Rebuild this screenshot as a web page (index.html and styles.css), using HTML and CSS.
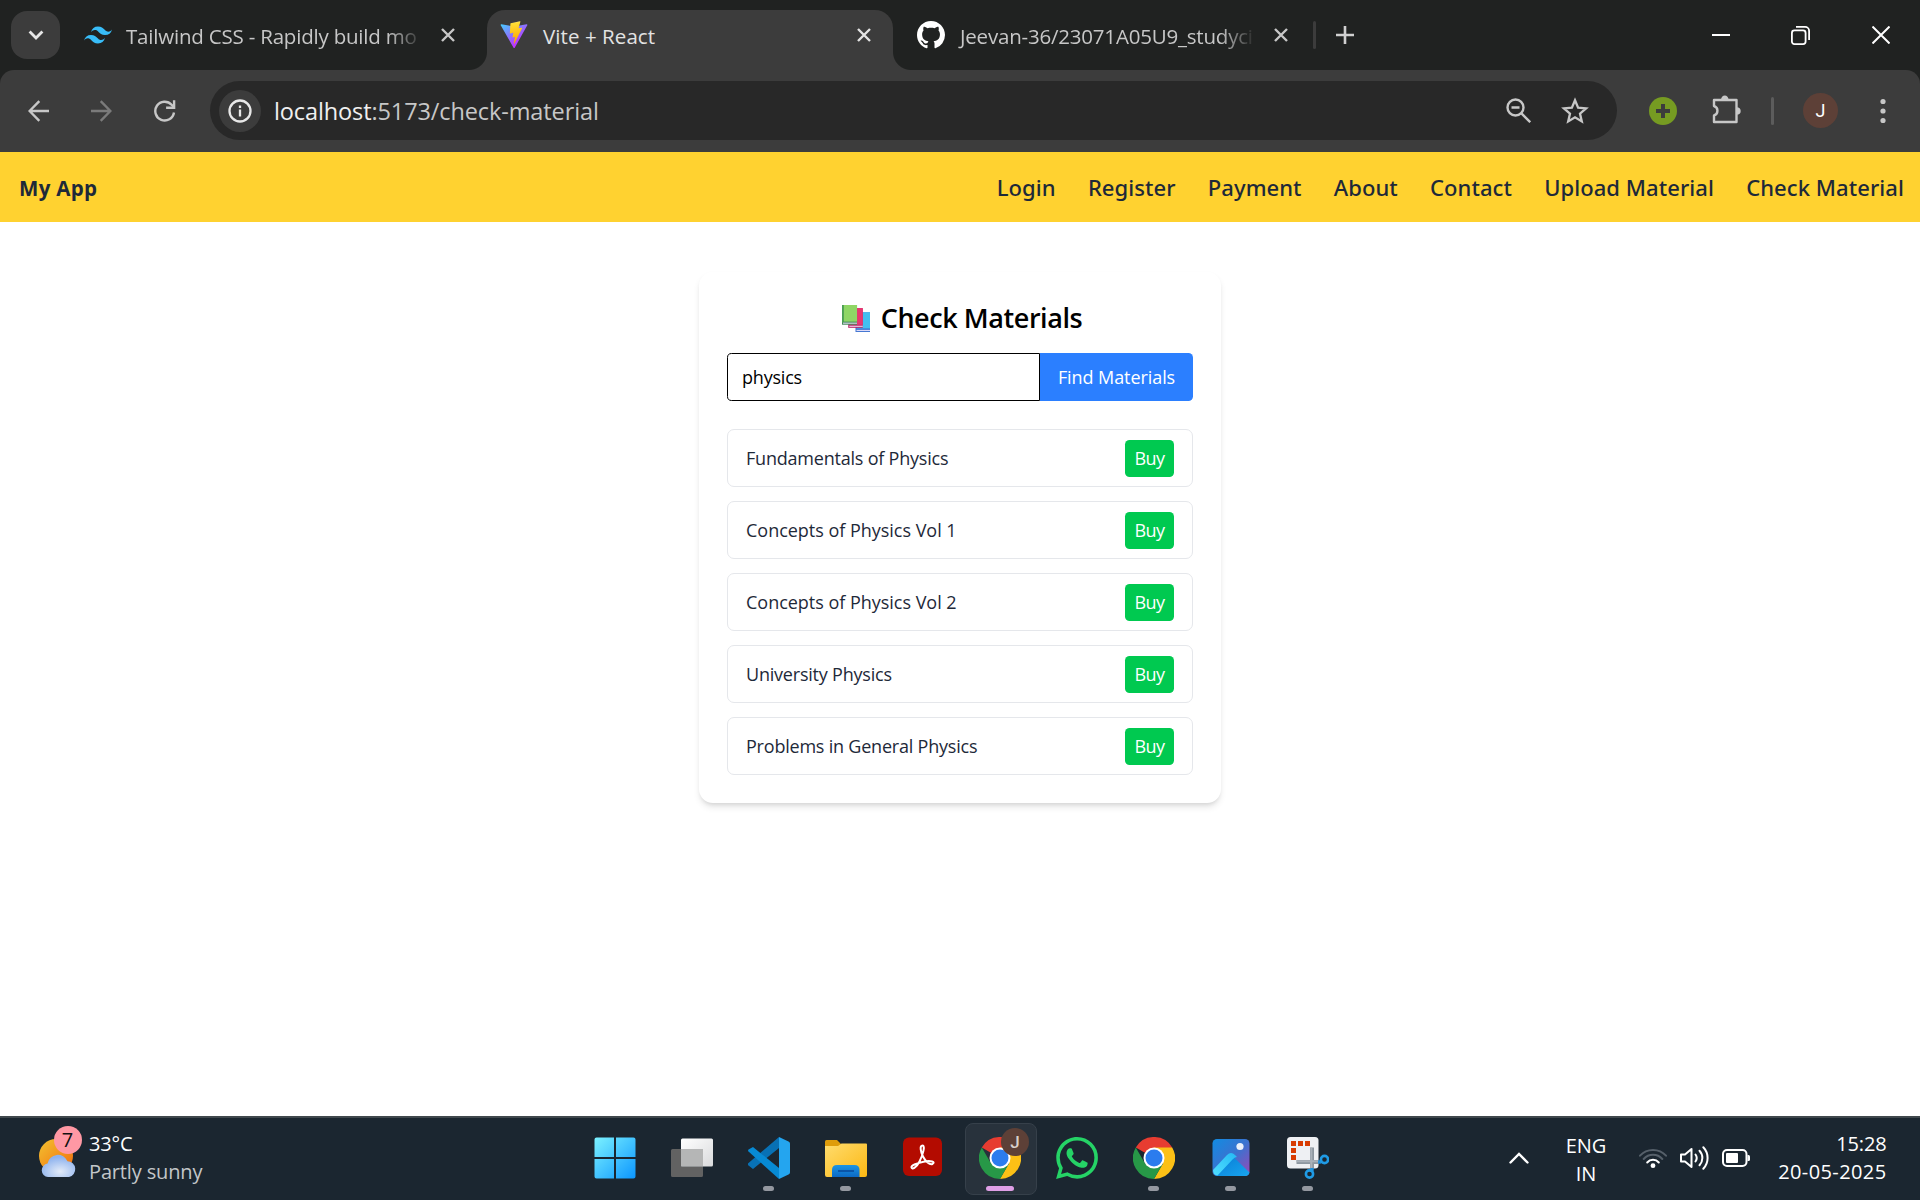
FILE: index.html
```html
<!DOCTYPE html>
<html lang="en">
<head>
<meta charset="utf-8">
<title>Vite + React</title>
<link rel="stylesheet" href="styles.css">
</head>
<body>
<svg class="defs" width="0" height="0" aria-hidden="true">
  <defs>
    <linearGradient id="vite-a" x1="6" y1="33" x2="235" y2="344" gradientUnits="userSpaceOnUse"><stop stop-color="#41d1ff"/><stop offset="1" stop-color="#bd34fe"/></linearGradient>
    <linearGradient id="vite-b" x1="194.651" y1="8.818" x2="236.076" y2="292.989" gradientUnits="userSpaceOnUse"><stop stop-color="#ffea83"/><stop offset=".083" stop-color="#ffdd35"/><stop offset="1" stop-color="#ffa800"/></linearGradient>
    <linearGradient id="win" gradientUnits="userSpaceOnUse" x1="0" y1="0" x2="42" y2="42"><stop stop-color="#7df3ff"/><stop offset="1" stop-color="#0a95ff"/></linearGradient>
    <linearGradient id="sun" x1="0" y1="0" x2="1" y2="1"><stop stop-color="#f2c230"/><stop offset="1" stop-color="#f26a0c"/></linearGradient>
    <radialGradient id="cloud" cx=".55" cy=".75" r=".65"><stop stop-color="#e3ebf8"/><stop offset="1" stop-color="#8db2ee"/></radialGradient>
    <linearGradient id="folder" x1="0" y1="0" x2="1" y2="1"><stop stop-color="#ffdc6e"/><stop offset="1" stop-color="#fcb813"/></linearGradient>
    <linearGradient id="tray" x1="0" y1="0" x2="0" y2="1"><stop stop-color="#1b95e4"/><stop offset="1" stop-color="#0c69c4"/></linearGradient>
    <linearGradient id="photo" x1="0" y1="0" x2="1" y2="1"><stop stop-color="#118ce2"/><stop offset=".5" stop-color="#3b72cf"/><stop offset="1" stop-color="#9a48b8"/></linearGradient>
    <linearGradient id="hill-l" x1="0" y1="1" x2="1" y2="0"><stop stop-color="#50deff"/><stop offset="1" stop-color="#25b9f4"/></linearGradient>
    <linearGradient id="hill-r" x1="0" y1="0" x2="1" y2="1"><stop stop-color="#0879d4"/><stop offset="1" stop-color="#18a5ee"/></linearGradient>
    <linearGradient id="white" x1="0" y1="0" x2="1" y2="1"><stop stop-color="#fff"/><stop offset="1" stop-color="#d9dadc"/></linearGradient>
    <symbol id="close" viewBox="0 0 14 14"><path d="M1 1l12 12M13 1L1 13" fill="none" stroke="currentColor" stroke-width="2.4"/></symbol>
    <symbol id="chrome" viewBox="0 0 42 42">
      <path d="M2.800 10.500a21 21 0 0 1 36.400 0L21 21z" fill="#e73c31"/>
      <path d="M21 10.500H39.200A21 21 0 0 1 21 42l9.100-15.750z" fill="#fcc016"/>
      <path d="M2.800 10.500A21 21 0 0 0 21 42l9.100-15.750L21 30 11.900 26.250z" fill="#279847"/>
      <circle cx="21" cy="21" r="10.500" fill="#fff"/>
      <circle cx="21" cy="21" r="8.500" fill="#2b7cee"/>
    </symbol>
  </defs>
</svg>

<header class="tabstrip">
  <button class="tab-search" aria-label="Search tabs"><svg width="16" height="10" viewBox="0 0 16 10"><path d="M1.600 1.600L8 8l6.400-6.400" fill="none" stroke="#e6e6e6" stroke-width="2.800"/></svg></button>
  <div class="tab tab-first">
    <svg width="28" height="28" viewBox="0 0 24 24"><path fill="#38bdf8" d="M12.001 4.800c-3.200 0-5.200 1.600-6 4.800 1.200-1.600 2.600-2.200 4.200-1.800.913.228 1.565.89 2.288 1.624C13.666 10.618 15.027 12 18.001 12c3.200 0 5.200-1.600 6-4.800-1.200 1.600-2.600 2.200-4.200 1.800-.913-.228-1.565-.89-2.288-1.624C16.337 6.182 14.976 4.800 12.001 4.800zm-6 7.200c-3.200 0-5.200 1.600-6 4.800 1.200-1.600 2.600-2.200 4.200-1.800.913.228 1.565.89 2.288 1.624 1.177 1.194 2.538 2.576 5.512 2.576 3.200 0 5.200-1.600 6-4.800-1.200 1.600-2.600 2.200-4.200 1.800-.913-.228-1.565-.89-2.288-1.624C10.337 13.382 8.976 12 6.001 12z"/></svg>
    <span class="tab-title fade">Tailwind CSS - Rapidly build mo</span>
    <svg class="x" width="14" height="14"><use href="#close"/></svg>
  </div>
  <div class="tab tab-active">
    <svg width="28" height="28" viewBox="0 0 410 404"><path fill="url(#vite-a)" d="M399.641 59.525L215.643 388.545c-3.799 6.793-13.559 6.833-17.415.073L10.582 59.556C6.380 52.190 12.680 43.267 21.028 44.759l184.195 32.923c1.175.21 2.378.208 3.553-.006l180.343-32.870c8.320-1.517 14.649 7.337 10.522 14.719z"/><path fill="url(#vite-b)" d="M292.965 1.574L156.801 28.255a5 5 0 0 0-4.030 4.611l-8.376 141.464c-.197 3.332 2.863 5.918 6.115 5.168l37.910-8.749c3.547-.818 6.752 2.306 6.023 5.873l-11.263 55.153c-.758 3.712 2.727 6.886 6.352 5.785l23.415-7.114c3.630-1.102 7.118 2.081 6.350 5.796l-17.899 86.633c-1.120 5.419 6.088 8.374 9.094 3.728l2.008-3.103 110.954-221.428c1.858-3.707-1.346-7.935-5.418-7.150l-39.022 7.532c-3.667.707-6.787-2.708-5.752-6.296l25.469-88.291c1.036-3.594-2.095-7.012-5.766-6.293z"/></svg>
    <span class="tab-title">Vite + React</span>
    <svg class="x" width="14" height="14"><use href="#close"/></svg>
  </div>
  <div class="tab tab-last">
    <svg width="28" height="28" viewBox="0 0 16 16"><path fill="#fff" d="M8 0C3.580 0 0 3.580 0 8c0 3.540 2.290 6.530 5.470 7.590.4.070.55-.17.55-.38 0-.19-.01-.82-.01-1.490-2.010.37-2.530-.49-2.690-.94-.09-.23-.48-.94-.82-1.130-.28-.15-.68-.52-.01-.53.63-.01 1.080.58 1.230.82.72 1.210 1.870.87 2.330.66.07-.52.28-.87.51-1.070-1.780-.2-3.640-.89-3.640-3.950 0-.87.31-1.590.82-2.150-.08-.2-.36-1.020.08-2.120 0 0 .67-.21 2.200.82.64-.18 1.320-.27 2-.27s1.360.09 2 .27c1.530-1.040 2.200-.82 2.200-.82.44 1.100.16 1.920.08 2.120.51.56.82 1.270.82 2.150 0 3.070-1.870 3.750-3.650 3.950.29.25.54.73.54 1.480 0 1.070-.01 1.930-.01 2.200 0 .21.15.46.55.38A8.010 8.010 0 0 0 16 8c0-4.420-3.580-8-8-8z"/></svg>
    <span class="tab-title fade">Jeevan-36/23071A05U9_studyci</span>
    <svg class="x" width="14" height="14"><use href="#close"/></svg>
  </div>
  <i class="tab-divider"></i>
  <svg class="new-tab" width="18" height="18" viewBox="0 0 18 18"><path d="M9 0v18M0 9h18" stroke="#d0d0d0" stroke-width="2.600"/></svg>
  <div class="window-buttons">
    <svg width="18" height="18" viewBox="0 0 18 18"><path d="M0 9h18" stroke="#fff" stroke-width="2"/></svg>
    <svg width="19" height="19" viewBox="0 0 19 19" fill="none" stroke="#fff" stroke-width="1.800"><rect x=".9" y="4.400" width="13.700" height="13.700" rx="2.500"/><path d="M5 .9h9.100a4 4 0 0 1 4 4V14"/></svg>
    <svg width="18" height="18" viewBox="0 0 18 18"><path d="M.5.5l17 17M17.500.5l-17 17" stroke="#fff" stroke-width="2"/></svg>
  </div>
</header>

<div class="toolbar-wrap">
<div class="toolbar">
  <div class="nav-buttons">
    <svg width="21" height="22" viewBox="0 0 21 22" fill="none" stroke="#c7c7c7" stroke-width="2.400"><path d="M21 11H2M11.300 1.200L1.600 11l9.700 9.800"/></svg>
    <svg width="21" height="22" viewBox="0 0 21 22" fill="none" stroke="#7b7b7b" stroke-width="2.400"><path d="M0 11h19M9.700 1.200l9.700 9.800-9.700 9.800"/></svg>
    <svg width="22" height="22" viewBox="0 0 22 22" fill="none" stroke="#c7c7c7" stroke-width="2.400"><path d="M20 12.500A9.400 9.400 0 1 1 17.600 4.700l2.500 2.600"/><path d="M20.100.3v7.500h-8"/></svg>
  </div>
  <div class="omnibox">
    <span class="site-info"><svg width="24" height="24" viewBox="0 0 24 24"><circle cx="12" cy="12" r="10.500" fill="none" stroke="#e8e8e8" stroke-width="2.300"/><path d="M12 10.600v6.900M12 6.500v2.500" stroke="#e8e8e8" stroke-width="2.300"/></svg></span>
    <span class="url"><b>localhost</b>:5173/check-material</span>
    <svg class="zoom" width="25" height="25" viewBox="0 0 25 25" fill="none" stroke="#c7c7c7" stroke-width="2.400"><circle cx="9.500" cy="9.500" r="8"/><path d="M5.500 9.500h8M15.200 15.200l9 9"/></svg>
    <svg width="28" height="27" viewBox="0 0 28 27" fill="none" stroke="#c7c7c7" stroke-width="2.300"><path d="M14 3.200l3.100 7.400 8 .7-6.100 5.300 1.800 7.800-6.800-4.100-6.800 4.100 1.800-7.800-6.100-5.300 8-.7z"/></svg>
  </div>
  <svg class="ext" width="28" height="28" viewBox="0 0 28 28"><circle cx="14" cy="14" r="14" fill="#769b22"/><path d="M14 7v14M7 14h14" stroke="#3c3c3c" stroke-width="4"/></svg>
  <svg class="puzzle" width="29" height="29" viewBox="0 0 29 29"><path d="M2 5h22.500v22H2v-6.500a5 5 0 0 0 0-9.500z" fill="none" stroke="#c7c7c7" stroke-width="2.400" stroke-linejoin="round"/><path d="M9 5a3.800 4.500 0 0 1 7.600 0zM24.500 12.200a4.200 3.800 0 0 1 0 7.600z" fill="#c7c7c7"/></svg>
  <i class="toolbar-divider"></i>
  <span class="avatar">J</span>
  <svg class="dots" width="6" height="26" viewBox="0 0 6 26" fill="#c7c7c7"><circle cx="3" cy="3.500" r="2.600"/><circle cx="3" cy="13" r="2.600"/><circle cx="3" cy="22.500" r="2.600"/></svg>
</div>
</div>

<nav class="site-nav">
  <strong>My App</strong>
  <ul><li>Login</li><li>Register</li><li>Payment</li><li>About</li><li>Contact</li><li>Upload Material</li><li>Check Material</li></ul>
</nav>

<main>
  <section class="card">
    <h2>
      <svg width="28" height="27" viewBox="0 0 27 26"><path d="M13 7h14v19H13z" fill="#4678d2"/><path d="M14.500 7H27v15.500H14.500z" fill="#43bff0"/><path d="M14 24h13v1H14z" fill="#e6e2fa"/><path d="M6 3h14v19H6z" fill="#bb2869"/><path d="M7 3h13v16H7z" fill="#e8366f"/><path d="M7 20h13v1H7z" fill="#eddcf4"/><path d="M0 0h14.500v19H0z" fill="#43885a"/><path d="M1.500 0h13v16h-13z" fill="#8fd665"/><path d="M0 0h1.500v17H0z" fill="#4ba052"/><path d="M1 17h13.500v1H1z" fill="#e6dcf5"/></svg>
      <span>Check Materials</span>
    </h2>
    <form class="search"><input type="text" value="physics" aria-label="Subject"><button type="button">Find Materials</button></form>
    <ul class="results">
      <li><span>Fundamentals of Physics</span><button>Buy</button></li>
      <li><span class="volume">Concepts of Physics Vol 1</span><button>Buy</button></li>
      <li><span class="volume">Concepts of Physics Vol 2</span><button>Buy</button></li>
      <li><span>University Physics</span><button>Buy</button></li>
      <li><span>Problems in General Physics</span><button>Buy</button></li>
    </ul>
  </section>
</main>

<footer class="taskbar">
  <div class="weather">
    <div class="weather-icon">
      <svg width="40" height="40" viewBox="0 0 40 40"><circle cx="18" cy="18" r="17" fill="url(#sun)"/><path d="M10 39a6.800 6.800 0 0 1-.5-13.500 10.500 10.500 0 0 1 20-2.300A8 8 0 0 1 31 39z" fill="url(#cloud)"/></svg>
      <span class="badge">7</span>
    </div>
    <div class="weather-text"><span>33°C</span><span class="dim">Partly sunny</span></div>
  </div>
  <div class="apps">
    <div class="app"><svg width="42" height="42" viewBox="0 0 42 42"><path fill="url(#win)" d="M2.500.5H20v19.500H.5V2.500a2 2 0 0 1 2-2zM22 .5h17.500a2 2 0 0 1 2 2V20H22zM.5 22H20v19.500H2.500a2 2 0 0 1-2-2zM22 22h19.500v17.500a2 2 0 0 1-2 2H22z"/></svg></div>
    <div class="app"><svg width="42" height="42" viewBox="0 0 42 42"><rect x="10" y="1.500" width="32" height="28" rx="1.500" fill="url(#white)"/><path d="M1.500 12H10v17.500h22v9q0 1.500-1.500 1.500h-29Q0 40 0 38.500v-25Q0 12 1.500 12z" fill="#626262"/><path d="M10 12h22v17.500H10z" fill="#b5b6b6"/></svg></div>
    <div class="app"><svg width="42" height="42" viewBox="0 0 42 42"><path d="M31 0v11L5 32l-4.500-3.500a1.500 1.500 0 0 1 0-2.500z" fill="#0871b5"/><path d="M5 10L31 31v11L.5 14.500a1.500 1.500 0 0 1 0-2z" fill="#078ad4"/><path d="M31 0l9.500 4.500A2.500 2.500 0 0 1 42 7v28a2.500 2.500 0 0 1-1.500 2.500L31 42z" fill="#24a5ef"/></svg><i></i></div>
    <div class="app"><svg width="42" height="42" viewBox="0 0 42 42"><path d="M0 4.500Q0 3 1.500 3H12l4 4v5H0z" fill="#df9c0a"/><path d="M0 9h13l3.500-2.500H41q1 0 1 1V38q0 2-2 2H2q-2 0-2-2z" fill="url(#folder)"/><path d="M7 40v-7q0-5 5-5h17.500q5 0 5 5v7z" fill="url(#tray)"/><path d="M13 34h16" stroke="#0a55a8" stroke-width="2"/></svg><i></i></div>
    <div class="app"><svg width="42" height="42" viewBox="0 0 42 42"><rect x="1" y=".5" width="39" height="38.500" rx="6" fill="#b30b00"/><path d="M20.500 8.500c-3 0-2 6 .5 11s6.500 8.500 9.500 7.500c3.500-2-1.500-4-9-2.300S9 28.500 9.500 30.500s4.500 1 8-6S23.500 8.500 20.500 8.500z" fill="none" stroke="#fff" stroke-width="2"/></svg></div>
    <div class="app current"><svg width="42" height="42"><use href="#chrome"/></svg><span class="badge profile">J</span><i></i></div>
    <div class="app"><svg width="42" height="42" viewBox="0 0 24 24"><path fill="#25d366" d="M17.472 14.382c-.297-.149-1.758-.867-2.030-.967-.273-.099-.471-.148-.67.15-.197.297-.767.966-.94 1.164-.173.199-.347.223-.644.075-.297-.15-1.255-.463-2.390-1.475-.883-.788-1.480-1.761-1.653-2.059-.173-.297-.018-.458.13-.606.134-.133.298-.347.446-.52.149-.174.198-.298.298-.497.099-.198.05-.371-.025-.52-.075-.149-.669-1.612-.916-2.207-.242-.579-.487-.5-.669-.51-.173-.008-.371-.01-.57-.01-.198 0-.52.074-.792.372-.272.297-1.040 1.016-1.040 2.479 0 1.462 1.065 2.875 1.213 3.074.149.198 2.096 3.200 5.077 4.487.709.306 1.262.489 1.694.625.712.227 1.360.195 1.871.118.571-.085 1.758-.719 2.006-1.413.248-.694.248-1.289.173-1.413-.074-.124-.272-.198-.57-.347m-5.421 7.403h-.004a9.870 9.870 0 0 1-5.031-1.378l-.361-.214-3.741.982.998-3.648-.235-.374a9.860 9.860 0 0 1-1.510-5.260c.001-5.450 4.436-9.884 9.888-9.884 2.640 0 5.122 1.030 6.988 2.898a9.825 9.825 0 0 1 2.893 6.994c-.003 5.450-4.437 9.884-9.885 9.884m8.413-18.297A11.815 11.815 0 0 0 12.050 0C5.495 0 .16 5.335.157 11.892c0 2.096.547 4.142 1.588 5.945L.057 24l6.305-1.654a11.882 11.882 0 0 0 5.683 1.448h.005c6.554 0 11.890-5.335 11.893-11.893a11.821 11.821 0 0 0-3.480-8.413z"/></svg></div>
    <div class="app"><svg width="42" height="42"><use href="#chrome"/></svg><i></i></div>
    <div class="app"><svg width="42" height="42" viewBox="0 0 42 42"><rect x="2.500" y="2" width="37" height="37" rx="4.500" fill="url(#photo)"/><path d="M4 36.500l18-18 17.500 17a4.500 4.500 0 0 1-4 3.500H7a4.500 4.500 0 0 1-3-2.500z" fill="url(#hill-r)"/><path d="M3 33l14-15q4-4 8 0l2 2q-2 0-4 2L7.500 38.500Q3 38 3 33z" fill="url(#hill-l)"/><circle cx="30" cy="9.500" r="3.600" fill="#eaf0fa"/></svg><i></i></div>
    <div class="app"><svg width="42" height="42" viewBox="0 0 42 42"><rect x="0" y="0" width="31.500" height="31.500" rx="3.500" fill="#eef0f3"/><path d="M4 4h5v5H4zM11 4h5v5h-5zM18 4h5v5h-5zM4 11h5v5H4zM4 18h5v5H4z" fill="#d83b01"/><path d="M9.500 25h22M25 10.500v21" fill="none" stroke="#8d97a0" stroke-width="4"/><path d="M9.500 24.300h22M24.300 10.500v21" fill="none" stroke="#a9b1b9" stroke-width="2"/><path d="M31 25h2l2-1M25 31v2l-1 2" fill="none" stroke="#1c8fdc" stroke-width="3.500"/><circle cx="37.500" cy="22.500" r="3.600" fill="none" stroke="#1f9be6" stroke-width="2.600"/><circle cx="22.500" cy="37" r="3.600" fill="none" stroke="#1f9be6" stroke-width="2.600"/></svg><i></i></div>
  </div>
  <div class="tray">
    <svg class="chev" width="20" height="12" viewBox="0 0 20 12"><path d="M1.500 10.500L10 2l8.500 8.500" fill="none" stroke="#fff" stroke-width="2.400" stroke-linecap="round"/></svg>
    <div class="lang"><span>ENG</span><span>IN</span></div>
    <svg width="28" height="22" viewBox="0 0 28 22" fill="none" stroke-width="2" stroke-linecap="round"><path d="M1 8.700a17.500 17.500 0 0 1 26 0M4.700 12a12.500 12.500 0 0 1 18.600 0" stroke="#56606a"/><path d="M8.200 15.500a7.700 7.700 0 0 1 11.600 0" stroke="#fff"/><circle cx="14" cy="18.700" r="2.400" fill="#fff"/></svg>
    <svg width="29" height="26" viewBox="0 0 29 26" fill="none" stroke="#fff" stroke-width="2" stroke-linecap="round" stroke-linejoin="round"><path d="M1 9.500h4l6.500-5.500v18L5 16.500H1zM15.500 9.500a6 6 0 0 1 0 7M19.500 5.800a10.500 10.500 0 0 1 0 14.400M23.300 2.300a15.500 15.500 0 0 1 0 21.400"/></svg>
    <svg width="29" height="18" viewBox="0 0 29 18"><rect x="1" y="1" width="23.500" height="16" rx="4" fill="none" stroke="#fff" stroke-width="2"/><rect x="4" y="4" width="12" height="10" rx="1" fill="#fff"/><path d="M25.500 6h1q1.500 0 1.500 1.500v3q0 1.500-1.500 1.500h-1z" fill="#fff"/></svg>
    <div class="clock"><span>15:28</span><span class="date">20-05-2025</span></div>
  </div>
</footer>
</body>
</html>
```
FILE: styles.css
```css
* { box-sizing: border-box; }
body {
  margin: 0;
  width: 1920px;
  height: 1200px;
  display: flex;
  flex-direction: column;
  overflow: hidden;
  background: #fff;
  font-family: "Open Sans", "Noto Sans", sans-serif;
}
button, input { font: inherit; border: 0; margin: 0; padding: 0; }
ul { list-style: none; margin: 0; padding: 0; }
svg { display: block; flex: none; }
.defs { position: absolute; }

/* Tab strip */
.tabstrip {
  height: 70px;
  display: flex;
  align-items: center;
  background: #202221;
  color: #c7c7c7;
}
.tab-search {
  width: 49px;
  height: 48px;
  margin-left: 11px;
  border-radius: 16px;
  background: #3c3c3c;
  display: flex;
  align-items: center;
  justify-content: center;
}
.tab { display: flex; align-items: center; }
.tab-title {
  flex: none;
  font-size: 20.5px;
  line-height: 30px;
  letter-spacing: 0.07px;
  white-space: nowrap;
  margin-top: 2px;
}
.tab-title.fade {
  overflow: hidden;
  letter-spacing: -0.2px;
  -webkit-mask-image: linear-gradient(90deg, #000 262px, transparent 298px);
  mask-image: linear-gradient(90deg, #000 262px, transparent 298px);
}
.tab-first { margin-left: 24px; width: 372px; }
.tab-first .tab-title { width: 292px; margin-left: 14px; }
.x { margin-left: auto; }
.tab-first .x { margin-right: 1px; }
.tab-active {
  position: relative;
  width: 406px;
  height: 60px;
  align-self: flex-end;
  margin-left: 31px;
  padding: 0 22px 10px 13px;
  border-radius: 18px 18px 0 0;
  background: #3c3c3c;
  color: #e3e3e3;
}
.tab-active::before, .tab-active::after {
  content: "";
  position: absolute;
  bottom: 0;
  width: 18px;
  height: 18px;
}
.tab-active::before { left: -18px; background: radial-gradient(circle at 0 0, transparent 17.5px, #3c3c3c 18.5px); }
.tab-active::after { right: -18px; background: radial-gradient(circle at 100% 0, transparent 17.5px, #3c3c3c 18.5px); }
.tab-active .tab-title { margin-left: 15px; }
.tab-last { margin-left: 24px; width: 371px; }
.tab-last .tab-title { margin-left: 13px; padding-left: 2px; width: 295px; }
.tab-divider { width: 3px; height: 28px; margin-left: 25px; border-radius: 2px; background: #3c3c3c; }
.new-tab { margin-left: 19.5px; }
.window-buttons { margin-left: auto; margin-right: 30px; display: flex; align-items: center; gap: 61.500px; }
.window-buttons svg:nth-child(2) { margin: 0 1px 0 -1px; }

/* Toolbar */
.toolbar-wrap { background: #202221; }
.toolbar {
  height: 82px;
  padding-bottom: 1px;
  display: flex;
  align-items: center;
  border-radius: 14px 14px 0 0;
  background: #3c3c3c;
}
.nav-buttons { display: flex; align-items: center; gap: 42px; margin-left: 28px; }
.omnibox {
  width: 1407px;
  height: 59px;
  margin-left: 34px;
  padding: 0 28px 0 9px;
  display: flex;
  align-items: center;
  border-radius: 30px;
  background: #282828;
}
.site-info {
  width: 42px;
  height: 42px;
  display: grid;
  place-items: center;
  border-radius: 50%;
  background: #3c3c3c;
}
.url { margin-left: 13px; padding-top: 1px; font-size: 23.500px; line-height: 32px; letter-spacing: -0.11px; color: #c7c7c7; }
.url b { font-weight: 400; color: #f0f0f0; }
.zoom { margin-left: auto; margin-right: 30px; }
.ext { margin-left: 32px; }
.puzzle { margin: -3px 0 0 35px; }
.toolbar-divider { width: 3px; height: 28px; margin-left: 30px; border-radius: 2px; background: #5c5c5c; }
.avatar {
  width: 35px;
  height: 35px;
  margin-left: 29px;
  display: grid;
  place-items: center;
  border-radius: 50%;
  background: #5d4037;
  color: #fff;
  font: 18px/35px Roboto, sans-serif;
}
.dots { margin-left: 42px; }

/* Page navigation */
.site-nav {
  height: 70px;
  padding: 0 16px 0 19px;
  display: flex;
  align-items: center;
  justify-content: space-between;
  background: #ffd230;
  color: #1e2939;
}
.site-nav strong { font-size: 20.500px; line-height: 30px; letter-spacing: 0.3px; padding-top: 1px; }
.site-nav ul {
  display: flex;
  gap: 32.200px;
  font: 500 22px/32px "Noto Sans", sans-serif;
  letter-spacing: 0.07px;
}

/* Materials card */
main { flex: 1; padding-top: 50px; }
.card {
  width: 522px;
  height: 531px;
  margin: 0 auto;
  padding: 27px 28px;
  border-radius: 14px;
  background: #fff;
  box-shadow: 0 4.600px 7px -1px rgba(0, 0, 0, 0.1), 0 2.300px 4.600px -2px rgba(0, 0, 0, 0.1);
}
.card h2 {
  margin: 0 0 17px;
  height: 37px;
  padding-left: 4px;
  display: flex;
  align-items: center;
  justify-content: center;
  gap: 11px;
  font-size: 27px;
  font-weight: 600;
  line-height: 37px;
  letter-spacing: -0.43px;
}
.card h2 svg { margin-top: 2px; }
.search { display: flex; height: 48px; font-size: 18px; letter-spacing: -0.08px; }
.search input {
  flex: 1;
  min-width: 0;
  padding: 0 14px;
  border: 1px solid #000;
  border-radius: 4.600px 0 0 4.600px;
  letter-spacing: -0.2px;
  background: #fff;
}
.search button {
  width: 153px;
  border-radius: 0 4.600px 4.600px 0;
  background: #2b7fff;
  color: #fff;
  letter-spacing: inherit;
}
.results { margin-top: 28px; display: grid; gap: 14px; }
.results li {
  height: 58px;
  padding: 0 18px;
  display: flex;
  align-items: center;
  justify-content: space-between;
  border: 1px solid #e5e7eb;
  border-radius: 7px;
  color: #1e2939;
  font-size: 18px;
  letter-spacing: -0.21px;
}
.results .volume { letter-spacing: -0.02px; }
.results button {
  width: 49px;
  height: 37px;
  border-radius: 4.600px;
  background: #00c950;
  color: #fff;
  letter-spacing: -0.5px;
}

/* Taskbar */
.taskbar {
  height: 84px;
  display: grid;
  grid-template-columns: 576px 770px 1fr;
  border-top: 2px solid #40484d;
  background: #1b2630;
  color: #fff;
  font-size: 20px;
  line-height: 28px;
  letter-spacing: -0.15px;
}
.weather { display: flex; align-items: center; padding-left: 37.5px; padding-bottom: 2px; gap: 11.5px; }
.weather-icon { position: relative; }
.badge {
  position: absolute;
  width: 28px;
  height: 28px;
  border-radius: 50%;
  background: #ff98a4;
  color: #111;
  text-align: center;
}
.weather-icon .badge { left: 16px; top: -12px; }
.weather-text, .lang, .clock { display: flex; flex-direction: column; }
.dim { color: #c3c6c9; }
.apps { display: grid; grid-template-columns: repeat(10, 77px); }
.app { position: relative; display: grid; place-items: center; padding-bottom: 2px; }
.app i {
  position: absolute;
  bottom: 9px;
  left: 33px;
  width: 11px;
  height: 5px;
  border-radius: 3px;
  background: #9498a0;
}
.current::before {
  content: "";
  position: absolute;
  left: 4px;
  top: 5px;
  width: 70px;
  height: 70px;
  border: 1px solid #36404a;
  border-radius: 8px;
  background: #28323c;
}
.current svg { z-index: 1; }
.current i { left: 25px; width: 28px; background: #df9fe6; }
.badge.profile {
  z-index: 2;
  left: 40px;
  top: 10px;
  background: #5d4037;
  color: #d8cfcb;
  font: 500 17px/28px Roboto, sans-serif;
}
.tray { display: flex; align-items: center; padding: 0 33.5px 2px 0; }
.chev { margin-left: 163px; }
.lang { width: 60px; margin-left: 27px; margin-right: 23px; padding-top: 3px; text-align: center; }
.tray svg + svg { margin-left: 13px; }
.clock { margin-left: auto; text-align: right; }
.date { letter-spacing: 0.4px; }
```
